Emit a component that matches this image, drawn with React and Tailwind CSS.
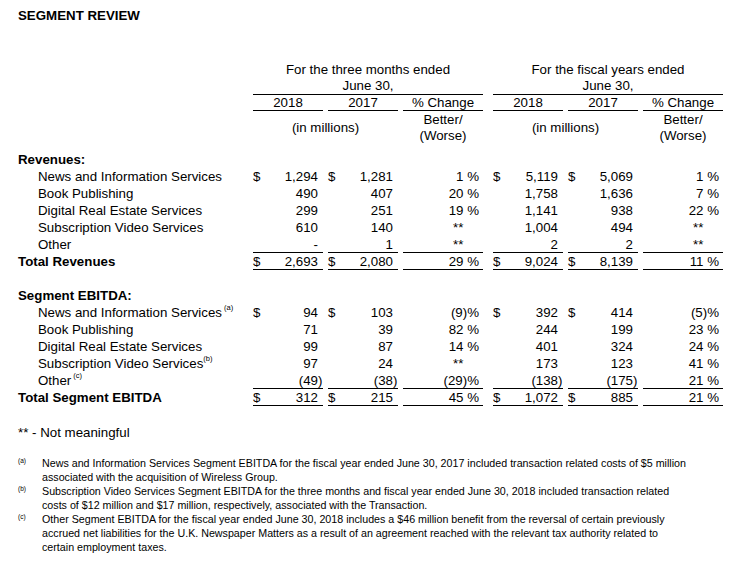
import React from 'react';

// Segment review table — revenue and EBITDA by segment, quarter and fiscal year.

const revenues = [
  { label: 'News and Information Services', q: ['$', '1,294', '$', '1,281', '1 %'], y: ['$', '5,119', '$', '5,069', '1 %'] },
  { label: 'Book Publishing', q: ['', '490', '', '407', '20 %'], y: ['', '1,758', '', '1,636', '7 %'] },
  { label: 'Digital Real Estate Services', q: ['', '299', '', '251', '19 %'], y: ['', '1,141', '', '938', '22 %'] },
  { label: 'Subscription Video Services', q: ['', '610', '', '140', '**'], y: ['', '1,004', '', '494', '**'] },
  { label: 'Other', q: ['', '-', '', '1', '**'], y: ['', '2', '', '2', '**'], line: true },
];

const ebitda = [
  { label: 'News and Information Services', note: ' (a)', q: ['$', '94', '$', '103', '(9)%'], y: ['$', '392', '$', '414', '(5)%'] },
  { label: 'Book Publishing', q: ['', '71', '', '39', '82 %'], y: ['', '244', '', '199', '23 %'] },
  { label: 'Digital Real Estate Services', q: ['', '99', '', '87', '14 %'], y: ['', '401', '', '324', '24 %'] },
  { label: 'Subscription Video Services', note: '(b)', q: ['', '97', '', '24', '**'], y: ['', '173', '', '123', '41 %'] },
  { label: 'Other', note: ' (c)', q: ['', '(49)', '', '(38)', '(29)%'], y: ['', '(138)', '', '(175)', '21 %'], line: true },
];

const footnotes = [
  {
    mark: '(a)',
    lines: [
      'News and Information Services Segment EBITDA for the fiscal year ended June 30, 2017 included transaction related costs of $5 million',
      'associated with the acquisition of Wireless Group.',
    ],
  },
  {
    mark: '(b)',
    lines: [
      'Subscription Video Services Segment EBITDA for the three months and fiscal year ended June 30, 2018 included transaction related',
      'costs of $12 million and $17 million, respectively, associated with the Transaction.',
    ],
  },
  {
    mark: '(c)',
    lines: [
      'Other Segment EBITDA for the fiscal year ended June 30, 2018 includes a $46 million benefit from the reversal of certain previously',
      'accrued net liabilities for the U.K. Newspaper Matters as a result of an agreement reached with the relevant tax authority related to',
      'certain employment taxes.',
    ],
  },
];

// Numbers in parentheses let the closing paren hang past the right padding.
function Num({ value }) {
  if (value.startsWith('(') && value.endsWith(')')) {
    return (
      <span>
        {value.slice(0, -1)}
        <span className="inline-block w-0">)</span>
      </span>
    );
  }
  return <span>{value}</span>;
}

function Money({ dollar, value, line, className = '' }) {
  return (
    <div className={`flex h-[17px] w-[70px] justify-between ${line ? 'border-b border-black' : ''} ${className}`}>
      <span>{dollar}</span>
      <span className="pr-[5px]">
        <Num value={value} />
      </span>
    </div>
  );
}

function Pct({ value, line, className = '' }) {
  return (
    <div className={`h-[17px] w-[80px] pr-[4px] text-right ${line ? 'border-b border-black' : ''} ${className}`}>
      {value === '**' ? (
        <span>
          **<span className="invisible"> %</span>
        </span>
      ) : (
        value
      )}
    </div>
  );
}

function Row({ label, note, bold, indent, q = [], y = [], line }) {
  const empty = q.length === 0;
  return (
    <div className="flex h-[17px] leading-[17px]">
      <div className={`w-[253px] whitespace-nowrap ${indent ? 'pl-[38px]' : 'pl-[18px]'} ${bold ? 'font-bold' : ''}`}>
        {label}
        {note && <sup className="align-[3px] text-[7.5px]">{note}</sup>}
      </div>
      {!empty && (
        <>
          <Money dollar={q[0]} value={q[1]} line={line} />
          <Money dollar={q[2]} value={q[3]} line={line} className="ml-[5px]" />
          <Pct value={q[4]} line={line} className="ml-[5px]" />
          <Money dollar={y[0]} value={y[1]} line={line} className="ml-[10px]" />
          <Money dollar={y[2]} value={y[3]} line={line} className="ml-[5px]" />
          <Pct value={y[4]} line={line} className="ml-[5px]" />
        </>
      )}
    </div>
  );
}

function HeaderGroup({ title }) {
  return (
    <div className="w-[230px] text-center">
      <div className="h-[16px] leading-[16px]">{title}</div>
      <div className="h-[17px] border-b border-black leading-[16px]">June 30,</div>
      <div className="flex h-[16px] leading-[15px]">
        <div className="w-[70px] border-b border-black">2018</div>
        <div className="ml-[5px] w-[70px] border-b border-black">2017</div>
        <div className="ml-[5px] w-[80px] border-b border-black">% Change</div>
      </div>
      <div className="mt-[1px] flex h-[32px] leading-[16px]">
        <div className="flex w-[145px] items-center justify-center">(in millions)</div>
        <div className="ml-[5px] w-[80px]">
          <div>Better/</div>
          <div>(Worse)</div>
        </div>
      </div>
    </div>
  );
}

export default function App() {
  return (
    <div className="h-[588px] w-[746px] bg-white pt-[8px] font-['Liberation_Sans',Arial,sans-serif] text-[13.3px] text-black">
      <div className="pl-[18px] text-[13.3px] font-bold leading-[15px]">SEGMENT REVIEW</div>

      <div className="mt-[39px] flex pl-[253px]">
        <HeaderGroup title="For the three months ended" />
        <div className="ml-[10px]">
          <HeaderGroup title="For the fiscal years ended" />
        </div>
      </div>

      <div className="mt-[7px]">
        <Row label="Revenues:" bold />
        {revenues.map((r) => (
          <Row key={r.label} indent {...r} />
        ))}
        <Row
          label="Total Revenues"
          bold
          line
          q={['$', '2,693', '$', '2,080', '29 %']}
          y={['$', '9,024', '$', '8,139', '11 %']}
        />
        <div className="h-[17px]" />
        <Row label="Segment EBITDA:" bold />
        {ebitda.map((r) => (
          <Row key={r.label} indent {...r} />
        ))}
        <Row
          label="Total Segment EBITDA"
          bold
          line
          q={['$', '312', '$', '215', '45 %']}
          y={['$', '1,072', '$', '885', '21 %']}
        />
      </div>

      <div className="mt-[18px] pl-[18px] leading-[17px]">** - Not meaningful</div>

      <div className="mt-[15px] text-[10.7px] leading-[14px]">
        {footnotes.map((f) => (
          <div key={f.mark} className="flex">
            <div className="w-[42px] pl-[18px] text-[6.5px] leading-[10px]">{f.mark}</div>
            <div className="whitespace-nowrap">
              {f.lines.map((l) => (
                <div key={l}>{l}</div>
              ))}
            </div>
          </div>
        ))}
      </div>
    </div>
  );
}
